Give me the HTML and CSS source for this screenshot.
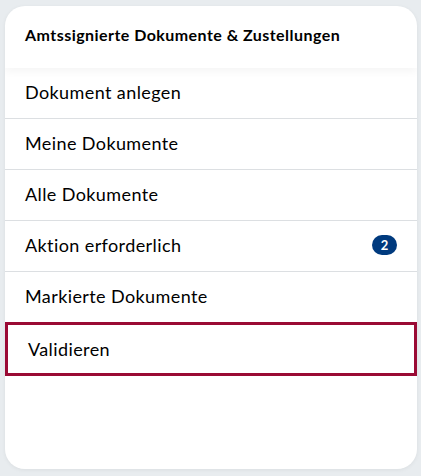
FILE: index.html
```html
<!DOCTYPE html>
<html lang="de">
<head>
<meta charset="utf-8">
<link rel="stylesheet" href="styles.css">
</head>
<body>
<div class="card">
  <div class="header">Amtssignierte Dokumente &amp; Zustellungen</div>
  <ul class="menu">
    <li class="item">Dokument anlegen</li>
    <li class="item">Meine Dokumente</li>
    <li class="item">Alle Dokumente</li>
    <li class="item">Aktion erforderlich <span class="badge">2</span></li>
    <li class="item">Markierte Dokumente</li>
    <li class="item active">Validieren</li>
  </ul>
</div>
</body>
</html>
```
FILE: styles.css
```css
html, body {
  margin: 0;
  padding: 0;
}
body {
  background: #e8ecef;
  font-family: "Lato", "Open Sans", sans-serif;
  color: #000;
  width: 421px;
  height: 476px;
  padding: 6px 4px 7px 5px;
  box-sizing: border-box;
}
.card {
  background: #fff;
  border-radius: 20px;
  height: 463px;
  overflow: hidden;
  box-shadow: 0 1px 4px rgba(0, 0, 0, 0.06);
}
.header {
  height: 62px;
  padding: 0 20px 6px;
  display: flex;
  align-items: center;
  box-sizing: border-box;
  font-size: 16px;
  letter-spacing: 0.45px;
  font-weight: 700;
  position: relative;
  box-shadow: 0 4px 8px rgba(0, 0, 0, 0.04);
}
.menu {
  list-style: none;
  margin: 0;
  padding: 0;
}
.item {
  height: 50px;
  display: flex;
  align-items: center;
  justify-content: space-between;
  padding: 0 20px 2px 20px;
  box-sizing: border-box;
  font-size: 18px;
  letter-spacing: 0.4px;
  border-bottom: 1px solid #dcdfe2;
  height: 51px;
}
.item.active {
  height: 54px;
  border: 3px solid #9a0a34;
  padding: 0 20px 1px 20px;
  margin-top: -1px;
}
.badge {
  background: #003a7e;
  color: #fff;
  font-size: 13px;
  font-weight: 700;
  letter-spacing: 0;
  border-radius: 10px;
  width: 25px;
  height: 20px;
  display: flex;
  align-items: center;
  justify-content: center;
}
```
